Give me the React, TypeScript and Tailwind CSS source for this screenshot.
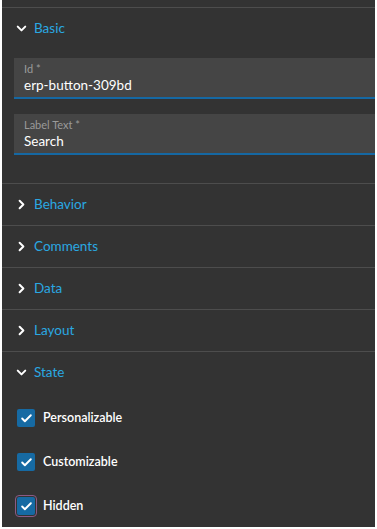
import React from 'react';
import { ChevronDown, ChevronRight, Check } from 'lucide-react';

const font = { fontFamily: '"Lato", "Noto Sans", sans-serif' };

const SectionHeader = ({ title, open }: { title: string; open?: boolean }) => (
    <div className="h-[41px] flex items-center pl-[12px] gap-[5px]">
        {open ? (
            <ChevronDown size={15} strokeWidth={3.2} className="text-white" />
        ) : (
            <ChevronRight size={15} strokeWidth={3.2} className="text-white" />
        )}
        <span className="text-[13.5px] text-[#2aa8e2]">{title}</span>
    </div>
);

const Field = ({ label, value }: { label: string; value: string }) => (
    <div className="ml-[12px] h-[41px] bg-[#454545] border-b-2 border-[#1568a3] pl-[10px] pt-[4px] flex flex-col">
        <span className="text-[11px] leading-[14px] text-[#9a9a9a]">{label}</span>
        <span className="text-[13.5px] leading-[18px] text-white">{value}</span>
    </div>
);

const CheckRow = ({ label, focused }: { label: string; focused?: boolean }) => (
    <div className="h-[44px] flex items-center pl-[13px] gap-[6px]">
        <div className={`w-[22px] h-[22px] flex items-center justify-center rounded-[4px] ${focused ? 'border border-[#8b5a85]' : 'border border-transparent'}`}>
            <div className="w-[18px] h-[18px] bg-[#166aa3] rounded-[2px] flex items-center justify-center">
                <Check size={13} strokeWidth={3.5} className="text-white" />
            </div>
        </div>
        <span className="text-[12.5px] text-white font-semibold">{label}</span>
    </div>
);

export default function App() {
    return (
        <div className="w-[377px] h-[529px] bg-white" style={font}>
            <div className="ml-[2px] w-[373px] h-[527px] bg-[#333333] overflow-hidden pt-[7px]">
                <div className="border-t border-[#4d4d4d]">
                    <SectionHeader title="Basic" open />
                    <div className="flex flex-col gap-[15px] pt-[9px] pb-[28px]">
                        <Field label="Id *" value="erp-button-309bd" />
                        <Field label="Label Text *" value="Search" />
                    </div>
                </div>
                {['Behavior', 'Comments', 'Data', 'Layout'].map((t) => (
                    <div key={t} className="border-t border-[#4d4d4d]">
                        <SectionHeader title={t} />
                    </div>
                ))}
                <div className="border-t border-[#4d4d4d]">
                    <SectionHeader title="State" open />
                    <div className="pt-[3px]">
                        <CheckRow label="Personalizable" />
                        <CheckRow label="Customizable" />
                        <CheckRow label="Hidden" focused />
                    </div>
                </div>
            </div>
        </div>
    );
}
